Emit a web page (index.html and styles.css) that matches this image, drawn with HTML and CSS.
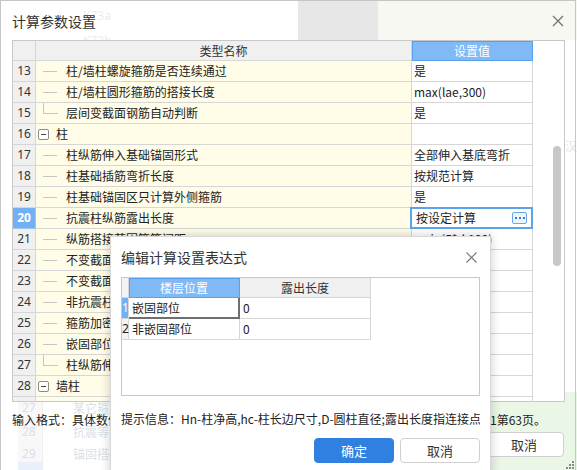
FILE: index.html
```html
<!DOCTYPE html>
<html lang="zh">
<head>
<meta charset="utf-8">
<title>计算参数设置</title>
<link rel="stylesheet" href="styles.css">
</head>
<body>
<div class="backdrop">
  <div class="bd-gray"></div>
  <div class="bd-light"></div>
  <div class="bd-green"></div>
  <span class="bd-text bd-kz1">KZ3a</span>
  <span class="bd-text bd-kz2">KZ3b</span>
  <span class="bd-text bd-han">汉</span>
  <div class="bd-col"></div>
  <div class="bd-sel"></div>
  <span class="bd-text bd-r1n">27</span><span class="bd-text bd-r1t">某它箍筋</span>
  <span class="bd-text bd-r2n">28</span><span class="bd-text bd-r2t">抗震等级</span>
  <span class="bd-text bd-r3n">29</span><span class="bd-text bd-r3t">锚固搭接</span>
</div>

<div class="win">
  <div class="win-head">
    <span class="win-title">计算参数设置</span>
    <svg class="close" width="12" height="12" viewBox="0 0 12 12"><path d="M1 1L11 11M11 1L1 11" stroke="#707070" stroke-width="1.2" fill="none"/></svg>
  </div>
  <div class="grid-frame">
    <div class="grid">
      <div class="c num hd"></div>
      <div class="c hd">类型名称</div>
      <div class="c hd hd-blue">设置值</div>

      <div class="c num">13</div>
      <div class="c type"><span class="ln"></span><span class="tx">柱/墙柱螺旋箍筋是否连续通过</span></div>
      <div class="c val">是</div>

      <div class="c num">14</div>
      <div class="c type"><span class="ln"></span><span class="tx">柱/墙柱圆形箍筋的搭接长度</span></div>
      <div class="c val">max(lae,300)</div>

      <div class="c num">15</div>
      <div class="c type"><span class="ln last"></span><span class="tx">层间变截面钢筋自动判断</span></div>
      <div class="c val">是</div>

      <div class="c num">16</div>
      <div class="c type"><span class="tog"><i></i></span><span class="gtx">柱</span></div>
      <div class="c val"></div>

      <div class="c num">17</div>
      <div class="c type"><span class="ln"></span><span class="tx">柱纵筋伸入基础锚固形式</span></div>
      <div class="c val">全部伸入基底弯折</div>

      <div class="c num">18</div>
      <div class="c type"><span class="ln"></span><span class="tx">柱基础插筋弯折长度</span></div>
      <div class="c val">按规范计算</div>

      <div class="c num">19</div>
      <div class="c type"><span class="ln"></span><span class="tx">柱基础锚固区只计算外侧箍筋</span></div>
      <div class="c val">是</div>

      <div class="c num on">20</div>
      <div class="c type"><span class="ln"></span><span class="tx">抗震柱纵筋露出长度</span></div>
      <div class="c val sel"><span>按设定计算</span><span class="more"><i></i><i></i><i></i></span></div>

      <div class="c num">21</div>
      <div class="c type"><span class="ln"></span><span class="tx">纵筋搭接范围箍筋间距</span></div>
      <div class="c val">&nbsp;&nbsp;min(5*d,100)</div>

      <div class="c num">22</div>
      <div class="c type"><span class="ln"></span><span class="tx">不变截面上柱多出的钢筋锚固</span></div>
      <div class="c val">1.2*Lae</div>

      <div class="c num">23</div>
      <div class="c type"><span class="ln"></span><span class="tx">不变截面下柱多出的钢筋锚固</span></div>
      <div class="c val">1.2*Lae</div>

      <div class="c num">24</div>
      <div class="c type"><span class="ln"></span><span class="tx">非抗震柱纵筋露出长度</span></div>
      <div class="c val">按设定计算</div>

      <div class="c num">25</div>
      <div class="c type"><span class="ln"></span><span class="tx">箍筋加密区设置</span></div>
      <div class="c val">按规范计算</div>

      <div class="c num">26</div>
      <div class="c type"><span class="ln"></span><span class="tx">嵌固部位设置</span></div>
      <div class="c val">基础顶面</div>

      <div class="c num">27</div>
      <div class="c type"><span class="ln last"></span><span class="tx">柱纵筋伸入承台锚固形式</span></div>
      <div class="c val">按规范计算</div>

      <div class="c num">28</div>
      <div class="c type"><span class="tog"><i></i></span><span class="gtx">墙柱</span></div>
      <div class="c val"></div>

      <div class="c num">29</div>
      <div class="c type"><span class="ln"></span><span class="tx">墙柱垂直钢筋</span></div>
      <div class="c val"></div>
    </div>
    <div class="thumb"></div>
  </div>
  <div class="win-foot">
    <div class="hint-row"><span>输入格式：具体数值或表达式</span><span>参见11G101-1第63页。</span></div>
    <div class="btns"><button class="btn primary">确定</button><button class="btn">取消</button></div>
  </div>
  <svg class="grip" width="8" height="8" viewBox="0 0 8 8">
    <rect x="6" y="0" width="2" height="2" fill="#8a8a8a"/>
    <rect x="3" y="3" width="2" height="2" fill="#8a8a8a"/>
    <rect x="6" y="3" width="2" height="2" fill="#8a8a8a"/>
    <rect x="0" y="6" width="2" height="2" fill="#8a8a8a"/>
    <rect x="3" y="6" width="2" height="2" fill="#8a8a8a"/>
    <rect x="6" y="6" width="2" height="2" fill="#8a8a8a"/>
  </svg>
</div>

<div class="dlg">
  <div class="dlg-head">
    <span class="dlg-title">编辑计算设置表达式</span>
    <svg class="dlg-close" width="11" height="11" viewBox="0 0 11 11"><path d="M0.5 0.5L10.5 10.5M10.5 0.5L0.5 10.5" stroke="#777" stroke-width="1.1" fill="none"/></svg>
  </div>
  <div class="box">
    <div class="igrid">
      <div class="ic inum"></div>
      <div class="ic ihd blue">楼层位置</div>
      <div class="ic ihd">露出长度</div>

      <div class="ic inum on">1</div>
      <div class="ic cur">嵌固部位</div>
      <div class="ic">0</div>

      <div class="ic inum">2</div>
      <div class="ic">非嵌固部位</div>
      <div class="ic">0</div>
    </div>
  </div>
  <div class="dlg-hint">提示信息：Hn-柱净高,hc-柱长边尺寸,D-圆柱直径;露出长度指连接点距离楼层位置的高度</div>
  <div class="dlg-btns"><button class="btn primary">确定</button><button class="btn">取消</button></div>
</div>
</body>
</html>
```

FILE: styles.css
```css
body {
  margin: 0;
  width: 577px;
  height: 470px;
  overflow: hidden;
  position: relative;
  background: #fff;
  font-family: "Noto Sans CJK SC", "Noto Sans", sans-serif;
  font-size: 12px;
  color: #222;
}

/* faint application content behind the translucent window */
.backdrop { position: absolute; left: 0; top: 0; width: 577px; height: 470px; z-index: 0; }
.bd-gray { position: absolute; left: 298px; top: 0; width: 80px; height: 40px; background: #e7e7e7; }
.bd-light { position: absolute; left: 378px; top: 0; width: 199px; height: 40px; background: #f6f8f1; }
.bd-green { position: absolute; left: 470px; top: 392px; width: 107px; height: 78px; background: #eaf7e6; }
.bd-text { position: absolute; color: #d9dfe9; font-size: 12px; line-height: 14px; }
.bd-kz1 { left: 83px; top: 9px; color: #ececec; font-family: "Noto Sans", sans-serif; }
.bd-kz2 { left: 83px; top: 34px; color: #ececec; font-family: "Noto Sans", sans-serif; }
.bd-han { left: 565px; top: 139px; color: #e6e6e6; }
.bd-col { position: absolute; left: 18px; top: 402px; width: 24px; height: 68px; background: #f8f8f8; border-right: 1px solid #eeeeee; }
.bd-sel { position: absolute; left: 18px; top: 462px; width: 24px; height: 8px; background: #eaf0fb; }
.bd-r1n { left: 22px; top: 401px; font-family: "Noto Sans", sans-serif; }
.bd-r1t { left: 73px; top: 401px; }
.bd-r2n { left: 22px; top: 425px; font-family: "Noto Sans", sans-serif; }
.bd-r2t { left: 73px; top: 425px; }
.bd-r3n { left: 22px; top: 447px; font-family: "Noto Sans", sans-serif; }
.bd-r3t { left: 73px; top: 447px; }

/* outer window */
.win {
  position: relative;
  z-index: 1;
  width: 576px;
  height: 470px;
  box-sizing: border-box;
  border: 1px solid #c6c6c6;
  border-bottom: 0;
  padding: 0 10px 0 11px;
  display: flex;
  flex-direction: column;
}
.win-head {
  height: 39px;
  flex: none;
  display: flex;
  align-items: center;
  justify-content: space-between;
}
.win-title { font-size: 14px; line-height: 20px; color: #333; margin-top: 1px; }
.close { margin-right: 1px; margin-top: 1px; }

.grid-frame {
  height: 362px;
  flex: none;
  box-sizing: border-box;
  border: 1px solid #c8c8c8;
  background: #fff;
  overflow: hidden;
  position: relative;
}
.grid {
  display: grid;
  grid-template-columns: 23px 376px 121px;
  grid-template-rows: 20px;
  grid-auto-rows: 21px;
}
.c {
  box-sizing: border-box;
  border-right: 1px solid #d6d6d6;
  border-bottom: 1px solid #d6d6d6;
  line-height: 20px;
  white-space: nowrap;
  overflow: hidden;
  position: relative;
}
.hd { background: #f0f0f0; text-align: center; line-height: 19px; color: #333; }
.hd-blue { background: #7fb9f6; color: #fff; border-color: #5a9fea; box-shadow: inset 1px 1px 0 #5a9fea; }
.num {
  background: #f0f0f0;
  text-align: center;
  font-family: "Noto Sans", sans-serif;
  color: #333;
}
.num.on { background: #72b0f4; color: #fff; font-weight: bold; border-color: #9cc8f7; }
.type { background: #fffde8; display: flex; align-items: center; }
.val { background: #fff; padding-left: 2px; }
.val.sel {
  overflow: visible;
  padding-left: 4px;
  padding-right: 5px;
  display: flex;
  align-items: center;
  justify-content: space-between;
}
.val.sel::after {
  content: "";
  position: absolute;
  left: -2px;
  top: -1px;
  right: -1px;
  bottom: -1px;
  border: 2px solid #5ea3e8;
}
.more {
  width: 15px;
  height: 12px;
  box-sizing: border-box;
  border: 1px solid #6aa6ea;
  border-radius: 2px;
  background: #eef5fe;
  display: flex;
  align-items: center;
  justify-content: center;
  gap: 2px;
}
.more i { width: 2px; height: 2px; background: #2f7fe0; }

.ln { width: 14px; height: 1px; background: #c6c6c6; margin-left: 7px; flex: none; }
.ln.last {
  width: 15px;
  height: 11px;
  background: none;
  box-sizing: border-box;
  border-left: 1px solid #c6c6c6;
  border-bottom: 1px solid #c6c6c6;
  align-self: flex-start;
}
.tx { margin-left: 9px; }
.ln.last + .tx { margin-left: 8px; }
.tog {
  width: 11px;
  height: 11px;
  box-sizing: border-box;
  border: 1px solid #8c8c8c;
  border-radius: 2px;
  margin-left: 2px;
  display: flex;
  align-items: center;
  justify-content: center;
  flex: none;
  background: #fff;
}
.tog i { width: 5px; height: 1px; background: #444; }
.gtx { margin-left: 7px; }

.thumb {
  position: absolute;
  left: 540px;
  top: 105px;
  width: 8px;
  height: 120px;
  border-radius: 4px;
  background: #c8c8c8;
}

.win-foot { display: flex; flex-direction: column; }
.hint-row {
  display: flex;
  justify-content: space-between;
  margin-top: 9px;
  line-height: 18px;
  padding-right: 19px;
  white-space: nowrap;
}
.btns { display: flex; justify-content: flex-end; gap: 6px; margin-top: 3px; padding-right: 1px; }
.btn {
  width: 80px;
  height: 25px;
  box-sizing: border-box;
  border: 1px solid #cfcfcf;
  border-radius: 4px;
  background: #fff;
  font-family: "Noto Sans CJK SC", sans-serif;
  font-size: 13px;
  color: #333;
  padding: 0;
}
.btn.primary { background: #2f80e1; border-color: #2f80e1; color: #fff; }
.grip { position: absolute; right: 1px; bottom: 1px; }

/* inner dialog */
.dlg {
  position: absolute;
  z-index: 2;
  left: 110px;
  top: 236px;
  width: 381px;
  height: 250px;
  box-sizing: border-box;
  background: #fff;
  border: 1px solid #d8d8d8;
  box-shadow: 0 0 10px rgba(0, 0, 0, 0.2);
  padding: 0 10px;
  display: flex;
  flex-direction: column;
}
.dlg-head {
  height: 40px;
  flex: none;
  display: flex;
  align-items: center;
  justify-content: space-between;
}
.dlg-title { font-size: 14px; line-height: 20px; color: #333; }
.dlg-close { margin-right: 3px; }
.box {
  height: 119px;
  flex: none;
  box-sizing: border-box;
  border: 1px solid #c8c8c8;
  background: #fff;
}
.igrid {
  display: grid;
  grid-template-columns: 7px 111px 131px;
  grid-template-rows: 20px 21px 21px;
}
.ic {
  box-sizing: border-box;
  border-right: 1px solid #d6d6d6;
  border-bottom: 1px solid #d6d6d6;
  line-height: 20px;
  padding-left: 3px;
  white-space: nowrap;
  overflow: hidden;
}
.inum { padding-left: 0; text-align: center; background: #f3f3f3; font-family: "Noto Sans", sans-serif; overflow: visible; }
.inum.on { background: #72b0f4; color: #fff; }
.ihd { background: #f0f0f0; text-align: center; padding-left: 0; line-height: 19px; color: #333; }
.ihd.blue { background: #7fb9f6; color: #fff; border-color: #5a9fea; box-shadow: inset 1px 1px 0 #5a9fea; }
.ic.cur { border-right: 2px solid #6f6f6f; border-bottom: 2px solid #6f6f6f; line-height: 19px; }
.dlg-hint {
  margin-top: 14px;
  line-height: 18px;
  white-space: nowrap;
  overflow: hidden;
}
.dlg-btns { display: flex; justify-content: flex-end; gap: 6px; margin-top: 10px; }
```
